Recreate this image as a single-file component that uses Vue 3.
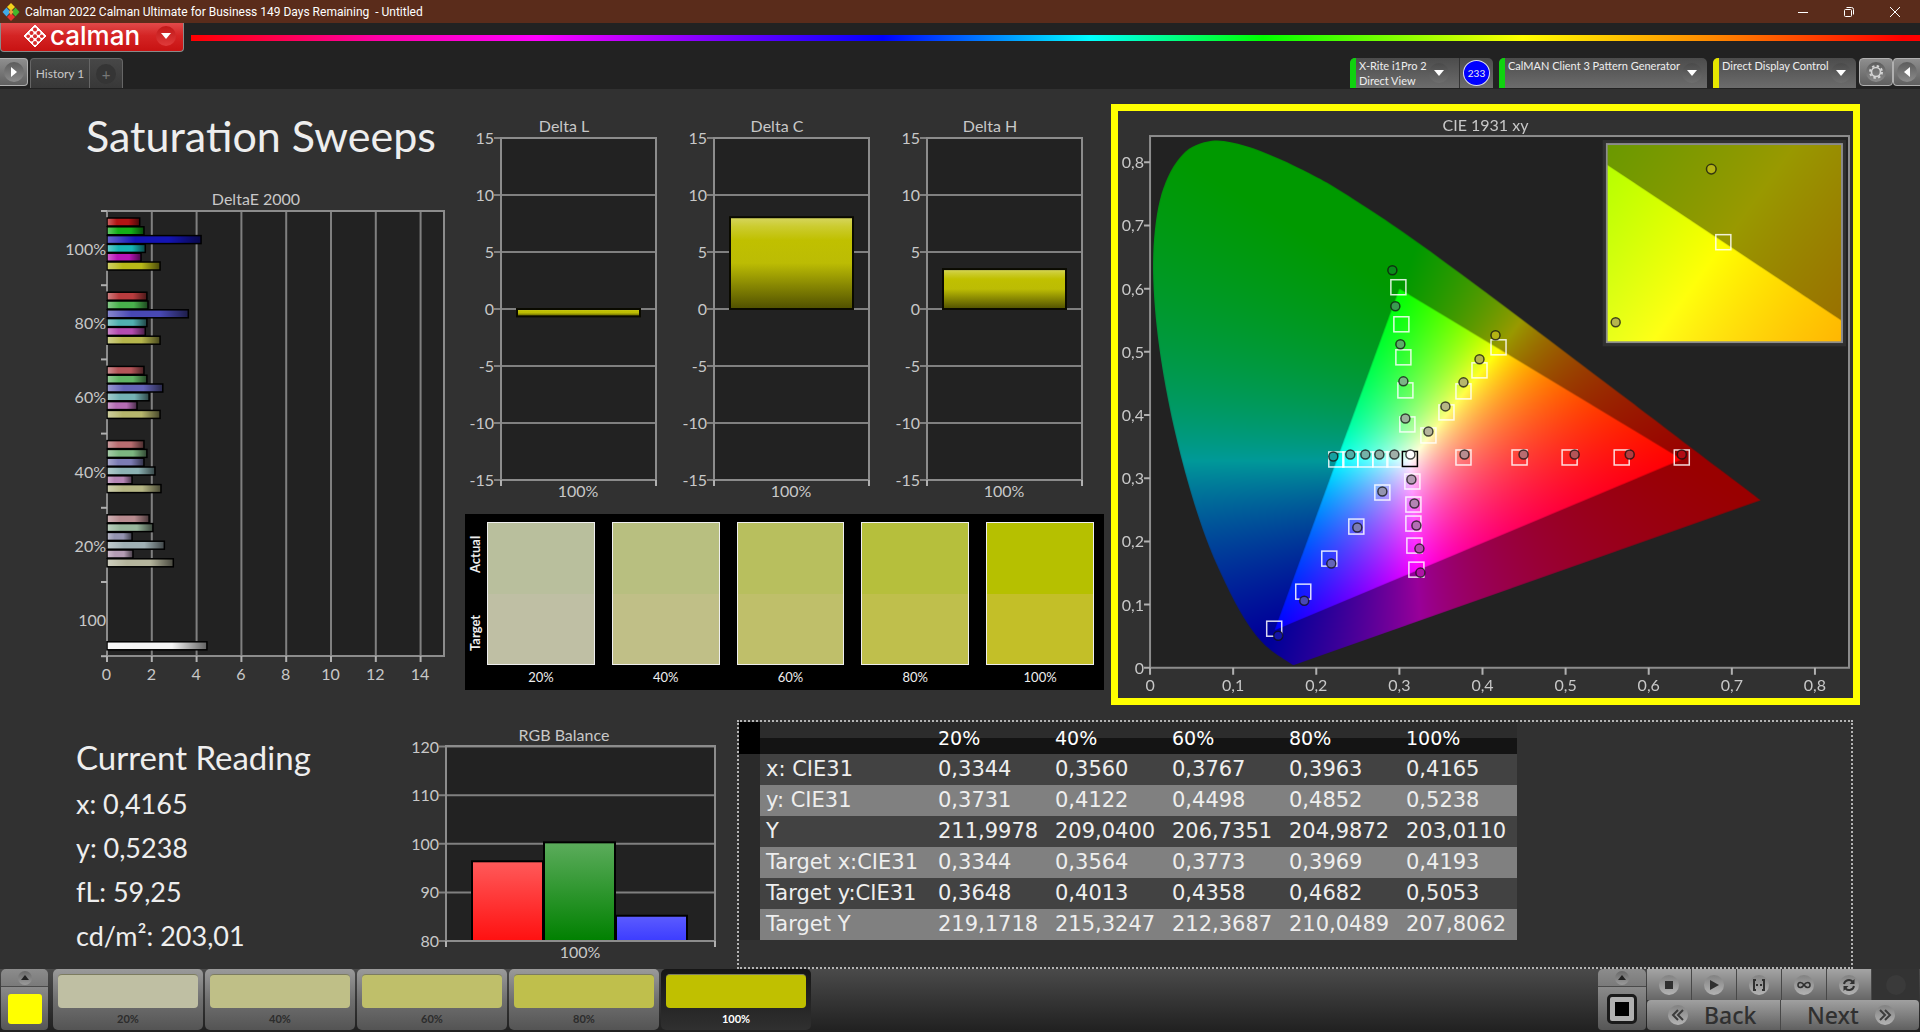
<script setup>
import { onMounted, ref } from 'vue'

const menus = [
  { id: 'meter', color: '#0fd20f', lines: ['X-Rite i1Pro 2', 'Direct View'], badge: '233' },
  { id: 'source', color: '#0fd20f', lines: ['CalMAN Client 3 Pattern Generator'] },
  { id: 'display', color: '#e6e600', lines: ['Direct Display Control'] }
]

/* DeltaE 2000 */
const unit = 22.4
const deltaE = [
  { label: '100%', bars: [['#b21414', 1.46], ['#14ae18', 1.65], ['#1414b4', 4.2], ['#16b4b4', 1.71], ['#b814b8', 1.52], ['#b8b818', 2.37]] },
  { label: '80%', bars: [['#b83c3e', 1.78], ['#48b04c', 1.83], ['#4848b4', 3.63], ['#50b0b0', 1.78], ['#b44cb0', 1.71], ['#b6b64c', 2.37]] },
  { label: '60%', bars: [['#b45458', 1.65], ['#60b464', 1.78], ['#6464b8', 2.49], ['#74b2b4', 1.88], ['#b46cb4', 1.34], ['#b6b66c', 2.37]] },
  { label: '40%', bars: [['#b86c70', 1.65], ['#7cb680', 1.78], ['#7c7cb4', 1.65], ['#8cb2b4', 2.14], ['#b484b4', 1.12], ['#b6b684', 2.41]] },
  { label: '20%', bars: [['#b88c90', 1.88], ['#98b69c', 2.05], ['#9494b0', 1.12], ['#a0b0b4', 2.56], ['#b49cb4', 1.16], ['#b4b49c', 2.96]] },
  { label: '100', bars: [null, null, null, null, null, null, ['#f4f4f4', 4.46]] }
]
const band = 74.2

/* Delta L / C / H */
const deltas = [
  { name: 'Delta L', value: -0.65 },
  { name: 'Delta C', value: 8.05 },
  { name: 'Delta H', value: 3.5 }
]
const deltaTicks = [15, 10, 5, 0, -5, -10, -15]
const dy = v => 194 - v * 11.4

const swatches = [
  { label: '20%', actual: '#b9bf9d', target: '#bfbfa4', button: '#bfbfa3' },
  { label: '40%', actual: '#b8bf80', target: '#c0bf87', button: '#bfbf87' },
  { label: '60%', actual: '#b8bf5e', target: '#bfbf6a', button: '#bfbf6a' },
  { label: '80%', actual: '#b6bf3c', target: '#bfbf4c', button: '#bfbf4c' },
  { label: '100%', actual: '#b6c000', target: '#c3bf28', button: '#c0c000' }
]

const readings = ['x: 0,4165', 'y: 0,5238', 'fL: 59,25', 'cd/m²: 203,01']

const rgbTicks = [120, 110, 100, 90, 80]
const rgbBars = [
  { x: 62, v: 96.4, fill: 'url(#gRed)' },
  { x: 134, v: 100.3, fill: 'url(#gGreen)' },
  { x: 206, v: 85.2, fill: 'url(#gBlue)' }
]
const ry = v => 237 - (v - 80) * 4.86

const columns = ['20%', '40%', '60%', '80%', '100%']
const rows = [
  ['x: CIE31', '0,3344', '0,3560', '0,3767', '0,3963', '0,4165'],
  ['y: CIE31', '0,3731', '0,4122', '0,4498', '0,4852', '0,5238'],
  ['Y', '211,9978', '209,0400', '206,7351', '204,9872', '203,0110'],
  ['Target x:CIE31', '0,3344', '0,3564', '0,3773', '0,3969', '0,4193'],
  ['Target y:CIE31', '0,3648', '0,4013', '0,4358', '0,4682', '0,5053'],
  ['Target Y', '219,1718', '215,3247', '212,3687', '210,0489', '207,8062']
]

/* CIE 1931 chart: plot origin and pixels per unit of x and y */
const O = { x: 32, y: 556, sx: 830, sy: 631 }
const cx = x => O.x + x * O.sx
const cy = y => O.y - y * O.sy
const xTicks = [0, 1, 2, 3, 4, 5, 6, 7, 8]
const tickText = n => (n ? '0,' + n : '0')

const targets = [
  [280, 176], [283, 213], [285, 246], [287, 279], [289, 313],
  [380, 236], [361, 259], [345, 280], [328, 301], [310, 324],
  [345, 346], [401, 346], [451, 346], [503, 346], [563, 346],
  [218, 348], [232, 348], [247, 348], [262, 348], [276, 348],
  [264, 381], [238, 415], [211, 447], [185, 480], [156, 517],
  [294, 370], [295, 393], [295, 412], [296, 434], [298, 458]
]
const measured = [
  [274, 159, '#0a8c1a'], [277, 195, '#3a9c50'], [282, 233, '#5cae68'], [285, 270, '#7cb486'], [287, 307, '#9cb49c'],
  [377, 224, '#b4b414'], [361, 248, '#b6b64c'], [345, 271, '#b6b66c'], [327, 295, '#b6b684'], [310, 320, '#b4b49c'],
  [346, 343, '#b88c90'], [405, 343, '#b86c70'], [456, 343, '#b45458'], [511, 343, '#b43c40'], [563, 343, '#b00c14'],
  [215, 345, '#16a0a0'], [232, 343, '#50b0a8'], [247, 343, '#74b2a8'], [261, 343, '#8cb2a8'], [276, 343, '#a0b0a8'],
  [264, 380, '#9494b0'], [239, 416, '#7c7cb4'], [213, 452, '#6464b8'], [186, 489, '#4848b4'], [160, 524, '#1414a8'],
  [293, 368, '#b49cb4'], [296, 392, '#b484b4'], [298, 414, '#b46cb4'], [301, 437, '#b44cb0'], [302, 461, '#b014a8']
]

const locus = [
  [0.1741, 0.005], [0.1714, 0.0051], [0.1644, 0.0109], [0.1566, 0.0177], [0.144, 0.0297], [0.1355, 0.0399],
  [0.1241, 0.0578], [0.1096, 0.0868], [0.0913, 0.1327], [0.0687, 0.2007], [0.0454, 0.295], [0.0235, 0.4127],
  [0.0082, 0.5384], [0.0039, 0.6548], [0.0139, 0.7502], [0.0389, 0.812], [0.0743, 0.8338], [0.1142, 0.8262],
  [0.1547, 0.8059], [0.1929, 0.7816], [0.2296, 0.7543], [0.3016, 0.6923], [0.3731, 0.6245], [0.4441, 0.5547],
  [0.5125, 0.4866], [0.5752, 0.4242], [0.627, 0.3725], [0.6915, 0.3083], [0.7347, 0.2653]
]
const gamut = [[0.64, 0.33], [0.3, 0.6], [0.15, 0.06]]

const W = 734
const H = 586
const canvas = ref(null)

/* brightest linear RGB that has the given chromaticity */
function chroma(x, y) {
  const X = x / y
  const Z = (1 - x - y) / y
  const lin = [
    3.2406 * X - 1.5372 - 0.4986 * Z,
    -0.9689 * X + 1.8758 + 0.0415 * Z,
    0.0557 * X - 0.204 + 1.057 * Z
  ].map(v => Math.max(0, v))
  const top = Math.max(...lin) || 1
  return lin.map(v => 255 * v / top)
}

function layer(w, h, toXY, gain) {
  const c = document.createElement('canvas')
  c.width = w
  c.height = h
  const g = c.getContext('2d')
  const img = g.createImageData(w, h)
  for (let j = 0; j < h; j++) {
    for (let i = 0; i < w; i++) {
      const [x, y] = toXY(i, j)
      const [r, gg, b] = chroma(x, Math.max(y, 0.0005))
      const k = (j * w + i) * 4
      img.data[k] = r * gain
      img.data[k + 1] = gg * gain
      img.data[k + 2] = b * gain
      img.data[k + 3] = 255
    }
  }
  g.putImageData(img, 0, 0)
  return c
}

function smooth(g, pts) {
  g.moveTo(...pts[0])
  for (let i = 0; i < pts.length - 1; i++) {
    const p0 = pts[Math.max(0, i - 1)]
    const p1 = pts[i]
    const p2 = pts[i + 1]
    const p3 = pts[Math.min(pts.length - 1, i + 2)]
    g.bezierCurveTo(
      p1[0] + (p2[0] - p0[0]) / 6, p1[1] + (p2[1] - p0[1]) / 6,
      p2[0] - (p3[0] - p1[0]) / 6, p2[1] - (p3[1] - p1[1]) / 6,
      p2[0], p2[1]
    )
  }
  g.closePath()
}

function triangle(g, map) {
  g.beginPath()
  gamut.forEach((p, i) => g[i ? 'lineTo' : 'moveTo'](...map(p)))
  g.closePath()
}

onMounted(() => {
  const g = canvas.value.getContext('2d')
  const toXY = (i, j) => [(i - O.x) / O.sx, (O.y - j) / O.sy]
  const map = p => [cx(p[0]), cy(p[1])]
  g.fillStyle = '#222'
  g.fillRect(O.x, 25, 698, 531)
  g.save()
  g.beginPath()
  smooth(g, locus.map(map))
  g.clip()
  g.drawImage(layer(W, H, toXY, 0.6), 0, 0)
  g.restore()
  g.save()
  triangle(g, map)
  g.clip()
  g.drawImage(layer(W, H, toXY, 1), 0, 0)
  g.restore()

  /* magnified view round the selected target */
  const box = { x: 488, y: 33, w: 235, h: 198 }
  const c = { x: 605, y: 131, sx: 4738, sy: 3956 }
  const zoomXY = (i, j) => [0.4193 + (i + box.x - c.x) / c.sx, 0.5053 - (j + box.y - c.y) / c.sy]
  const zoomMap = p => [c.x + (p[0] - 0.4193) * c.sx, c.y - (p[1] - 0.5053) * c.sy]
  g.save()
  g.beginPath()
  g.rect(box.x, box.y, box.w, box.h)
  g.clip()
  g.drawImage(layer(box.w, box.h, zoomXY, 0.6), box.x, box.y)
  triangle(g, zoomMap)
  g.clip()
  g.drawImage(layer(box.w, box.h, zoomXY, 1), box.x, box.y)
  g.restore()
})

const transport = ['stop', 'play', 'range', 'loop', 'refresh']
</script>

<template>
  <div class="app">
    <header class="titlebar">
      <svg class="appicon" width="18" height="18" viewBox="0 0 18 18" aria-hidden="true">
        <path d="M9 0l4 4-4 4-4-4z" fill="#f4d21c" />
        <path d="M4.500 4.500l4 4.500-4 4.500-4-4.500z" fill="#3fa9e8" />
        <path d="M13.500 4.500l4 4.500-4 4.500-4-4.500z" fill="#43b62c" />
        <path d="M9 10l4 4-4 4-4-4z" fill="#e6322e" />
        <path d="M9 6l2.500 3L9 12 6.500 9z" fill="#e8a03a" />
      </svg>
      <span class="caption">Calman 2022 Calman Ultimate for Business 149 Days Remaining&nbsp; - Untitled</span>
      <div class="winbuttons">
        <button aria-label="Minimize"><svg width="12" height="12"><path d="M1 6.500h10" /></svg></button>
        <button aria-label="Restore">
          <svg width="12" height="12"><rect x="1.500" y="3.500" width="7" height="7" rx="1" /><path d="M3.500 1.500h5q2 0 2 2v5" /></svg>
        </button>
        <button aria-label="Close"><svg width="12" height="12"><path d="M1 1l10 10M11 1L1 11" /></svg></button>
      </div>
    </header>

    <div class="toolbar">
      <div class="brandrow">
        <button class="brand">
          <svg width="24" height="24" viewBox="0 0 24 24" aria-hidden="true">
            <path d="M12 1l11 11-11 11L1 12z" fill="#fff" stroke="#fff" stroke-linejoin="round" />
            <g fill="#d82a2a">
              <circle cx="12" cy="5.500" r="2" /><circle cx="8.500" cy="9" r="2" /><circle cx="15.500" cy="9" r="2" />
              <circle cx="5.200" cy="12.300" r="1.800" /><circle cx="12" cy="12.300" r="2" /><circle cx="18.800" cy="12.300" r="1.800" />
              <circle cx="8.500" cy="15.600" r="2" /><circle cx="15.500" cy="15.600" r="2" /><circle cx="12" cy="19" r="2" />
            </g>
          </svg>
          <span class="wordmark">calman</span>
          <span class="knob red"><svg width="10" height="6"><path d="M0 0h10L5 6z" fill="#fff" /></svg></span>
        </button>
        <div class="rainbow"></div>
      </div>
      <div class="tabrow">
        <button class="square first" aria-label="Expand"><span class="knob"><svg width="6" height="10"><path d="M0 0l6 5-6 5z" fill="#fff" /></svg></span></button>
        <div class="tabs">
          <button class="tab">History 1</button>
          <button class="tab plus" aria-label="Add history"><span class="knob dark">+</span></button>
        </div>
        <div class="menus">
          <div v-for="m in menus" :key="m.id" class="menu" :class="m.id">
            <button class="menumain" :style="{ borderLeftColor: m.color }">
              <span class="menutext"><span v-for="l in m.lines" :key="l">{{ l }}</span></span>
              <span class="knob mid"><svg width="10" height="6"><path d="M0 0h10L5 6z" fill="#fff" /></svg></span>
            </button>
            <span v-if="m.badge" class="badge"><b>{{ m.badge }}</b></span>
          </div>
          <button class="square gear" aria-label="Settings">
            <span class="knob">
              <svg width="16" height="16" viewBox="0 0 16 16" fill="none" stroke="#d4d4d4">
                <circle cx="8" cy="8" r="4.500" stroke-width="1.600" />
                <circle cx="8" cy="8" r="6" stroke-width="2" stroke-dasharray="2.400 2.310" />
              </svg>
            </span>
          </button>
          <button class="square last" aria-label="Collapse"><span class="knob"><svg width="6" height="10"><path d="M6 0L0 5l6 5z" fill="#fff" /></svg></span></button>
        </div>
      </div>
    </div>

    <main class="board">
      <section class="left">
        <h1>Saturation Sweeps</h1>
        <svg class="chart" viewBox="0 0 465 510" role="img" aria-label="DeltaE 2000">
          <defs>
            <linearGradient id="gloss" x1="0" x2="1" y1="0" y2="0">
              <stop offset="0" stop-color="#fff" stop-opacity="0.350" />
              <stop offset="0.300" stop-color="#fff" stop-opacity="0" />
              <stop offset="0.650" stop-color="#000" stop-opacity="0" />
              <stop offset="1" stop-color="#000" stop-opacity="0.600" />
            </linearGradient>
          </defs>
          <text class="mid" x="256" y="20">DeltaE 2000</text>
          <rect class="plot" x="107" y="26" width="337" height="445" />
          <path v-for="i in 7" :key="i" class="line" :d="`M${107 + i * 44.8} 26V471`" />
          <rect class="frame" x="107" y="26" width="337" height="445" />
          <path v-for="i in 7" :key="'t' + i" class="tick" :d="`M101 ${26 + (i - 1) * band}h6`" />
          <g v-for="i in 8" :key="'x' + i">
            <path class="tick" :d="`M${107 + (i - 1) * 44.8} 471v6`" />
            <text class="mid" :x="106.5 + (i - 1) * 44.8" y="495">{{ (i - 1) * 2 }}</text>
          </g>
          <g v-for="(g, gi) in deltaE" :key="g.label">
            <text class="end" x="106" :y="70 + gi * band">{{ g.label }}</text>
            <template v-for="(b, bi) in g.bars" :key="bi">
              <g v-if="b">
                <rect x="107" :y="33 + gi * band + bi * 8.8" :width="b[1] * unit" height="8" :fill="b[0]" />
                <rect x="107" :y="33 + gi * band + bi * 8.8" :width="b[1] * unit" height="8" fill="url(#gloss)" stroke="#000" stroke-width="1.500" />
              </g>
            </template>
          </g>
        </svg>
      </section>

      <section class="middle">
        <div class="deltas">
          <svg v-for="d in deltas" :key="d.name" class="chart" viewBox="0 0 213 399" role="img" :aria-label="d.name">
            <defs>
              <linearGradient id="yellow" x1="0" x2="0" y1="0" y2="1">
                <stop offset="0" stop-color="#d6d660" />
                <stop offset="0.100" stop-color="#cccc30" />
                <stop offset="0.250" stop-color="#c0c000" />
                <stop offset="0.500" stop-color="#bcbc04" />
                <stop offset="1" stop-color="#505000" />
              </linearGradient>
            </defs>
            <text class="mid" x="99" y="17">{{ d.name }}</text>
            <rect class="plot" x="36" y="23" width="155" height="342" />
            <g v-for="t in deltaTicks" :key="t">
              <path class="line" :d="`M29 ${dy(t)}H191`" />
              <text class="end" x="29" :y="dy(t) + 6">{{ t }}</text>
            </g>
            <rect class="frame" x="36" y="23" width="155" height="342" />
            <path class="tick" d="M36 365v6M191 365v6" />
            <rect x="52" :y="Math.min(dy(d.value), 194)" width="123" :height="Math.abs(d.value) * 11.4" fill="url(#yellow)" stroke="#0a0a00" stroke-width="2" />
            <text class="mid" x="113" y="382">100%</text>
          </svg>
        </div>
        <div class="swatches">
          <div class="sides"><span>Actual</span><span>Target</span></div>
          <figure v-for="s in swatches" :key="s.label">
            <div class="swatch"><i :style="{ background: s.actual }"></i><i :style="{ background: s.target }"></i></div>
            <figcaption>{{ s.label }}</figcaption>
          </figure>
        </div>
      </section>

      <section class="cie">
        <canvas ref="canvas" class="layer" :width="W" :height="H"></canvas>
        <svg class="layer chart" :viewBox="`0 0 ${W} ${H}`" role="img" aria-label="CIE 1931 xy">
          <text class="mid" x="367" y="20">CIE 1931 xy</text>
          <rect class="frame" x="32" y="25" width="698" height="531" />
          <g v-for="t in xTicks" :key="t">
            <path class="tick" :d="`M${cx(t / 10)} 556v7M26 ${cy(t / 10)}h6`" />
            <text class="mid" :x="cx(t / 10)" y="579">{{ tickText(t) }}</text>
            <text class="end" x="26" :y="cy(t / 10) + 6">{{ tickText(t) }}</text>
          </g>
          <rect v-for="(p, i) in targets" :key="'s' + i" :x="p[0] - 7.5" :y="p[1] - 7.5" width="15" height="15" class="target" />
          <rect x="284" y="340" width="15" height="15" fill="none" stroke="#000" stroke-width="1.500" />
          <circle v-for="(p, i) in measured" :key="'c' + i" :cx="p[0]" :cy="p[1]" r="4.500" :fill="p[2]" class="reading" />
          <circle cx="292" cy="343" r="4.500" fill="#fff" class="reading" />
          <rect x="488" y="33" width="235" height="198" fill="none" stroke="#8c8c8c" stroke-width="2" />
          <rect x="485.500" y="30.500" width="240" height="203" fill="none" stroke="#303030" stroke-width="3" />
          <rect x="597" y="123.500" width="15" height="15" class="target" />
          <circle cx="592.500" cy="58" r="4.800" fill="#b4b414" class="reading" />
          <circle cx="497" cy="211" r="4.500" fill="#b6b64c" class="reading" />
        </svg>
      </section>

      <section class="current">
        <h2>Current Reading</h2>
        <p v-for="r in readings" :key="r">{{ r }}</p>
      </section>

      <section class="lower">
        <svg class="chart rgb" viewBox="0 1 330 264" role="img" aria-label="RGB Balance">
          <defs>
            <linearGradient id="gRed" x1="0" x2="0" y1="0" y2="1"><stop offset="0" stop-color="#ff5a5a" /><stop offset="1" stop-color="#ff1010" /></linearGradient>
            <linearGradient id="gGreen" x1="0" x2="0" y1="0" y2="1"><stop offset="0" stop-color="#5cac5c" /><stop offset="1" stop-color="#008000" /></linearGradient>
            <linearGradient id="gBlue" x1="0" x2="0" y1="0" y2="1"><stop offset="0" stop-color="#5c5cff" /><stop offset="1" stop-color="#3c3cff" /></linearGradient>
          </defs>
          <text class="mid" x="155" y="37">RGB Balance</text>
          <rect class="plot" x="37" y="43" width="269" height="194" />
          <g v-for="t in rgbTicks" :key="t">
            <path class="line" :d="`M30 ${ry(t)}H306`" />
            <text class="end" x="30" :y="ry(t) + 6">{{ t }}</text>
          </g>
          <rect v-for="b in rgbBars" :key="b.x" :x="b.x + 1" :y="ry(b.v)" width="71" :height="237 - ry(b.v)" :fill="b.fill" stroke="#000" stroke-width="2" />
          <rect class="frame" x="37" y="42" width="269" height="195" />
          <path class="tick" d="M37 237v6M306 237v6" />
          <text class="mid" x="171" y="254">100%</text>
        </svg>
        <div class="tablebox">
          <table>
            <thead>
              <tr><th class="grip"></th><th></th><th v-for="c in columns" :key="c" scope="col">{{ c }}</th></tr>
            </thead>
            <tbody>
              <tr v-for="r in rows" :key="r[0]">
                <td class="grip"></td>
                <th scope="row">{{ r[0] }}</th>
                <td v-for="(v, i) in r.slice(1)" :key="i">{{ v }}</td>
              </tr>
            </tbody>
          </table>
        </div>
      </section>
    </main>

    <footer class="bar">
      <div class="stack patch">
        <button class="up" aria-label="Raise pattern panel"><span class="knob tiny"><svg width="8" height="5"><path d="M4 0l4 5H0z" fill="#222" /></svg></span></button>
        <button class="chip" aria-label="Pattern colour"></button>
      </div>
      <div class="levels">
        <button v-for="(s, i) in swatches" :key="s.label" :class="{ on: i === 4 }">
          <i :style="{ background: s.button }"></i>
          <span>{{ s.label }}</span>
        </button>
      </div>
      <div class="stack">
        <button class="up" aria-label="Raise window panel"><span class="knob tiny"><svg width="8" height="5"><path d="M4 0l4 5H0z" fill="#222" /></svg></span></button>
        <button class="window" aria-label="Pattern window"><i></i></button>
      </div>
      <div class="controls">
        <div class="transport">
          <button v-for="t in transport" :key="t" :aria-label="t">
            <span class="knob flat">
              <svg width="16" height="16" viewBox="0 0 16 16" fill="none" stroke="#303030" stroke-width="2">
                <rect v-if="t === 'stop'" x="4" y="4" width="8" height="8" fill="#303030" stroke="none" />
                <path v-else-if="t === 'play'" d="M4 3l9 5-9 5z" fill="#303030" stroke="none" />
                <path v-else-if="t === 'range'" d="M5 3H3v10h2M11 3h2v10h-2M5 8h2M9 8h2" />
                <path v-else-if="t === 'loop'" d="M8 8C6 5 2 4.500 2 8s4 3 6 0 6-3.500 6 0-4 3-6 0z" stroke-width="1.600" />
                <g v-else><path d="M3 7a5 5 0 0 1 8.500-2.500M13 9a5 5 0 0 1-8.500 2.500" /><path d="M13.500 2v5h-5zM2.500 14V9h5z" fill="#303030" stroke="none" /></g>
              </svg>
            </span>
          </button>
          <span class="off"><span class="knob shade"></span></span>
        </div>
        <div class="nav">
          <button><span class="knob flat"><svg width="14" height="12" fill="none" stroke="#3c3c3c" stroke-width="2"><path d="M7 1L2 6l5 5M12 1L7 6l5 5" /></svg></span>Back</button>
          <button>Next<span class="knob flat"><svg width="14" height="12" fill="none" stroke="#3c3c3c" stroke-width="2"><path d="M2 1l5 5-5 5M7 1l5 5-5 5" /></svg></span></button>
        </div>
      </div>
    </footer>
  </div>
</template>

<style>
body { background: #313131; }
</style>

<style scoped>
.app { font-family: Lato, "Noto Sans", sans-serif; color: #eee; background: #313131; min-height: 100vh; display: flex; flex-direction: column; overflow: hidden; }
* { box-sizing: border-box; }
button { font: inherit; color: inherit; border: 0; padding: 0; margin: 0; background: none; display: flex; align-items: center; justify-content: center; }
svg { display: block; }

.titlebar { height: 23px; background: #5a2c1b; display: flex; align-items: center; color: #fff; font-family: Roboto, "Noto Sans", sans-serif; font-size: 12px; }
.appicon { margin: 0 5px 0 2px; }
.caption { flex: 1; white-space: nowrap; }
.winbuttons { display: flex; margin-right: 2px; }
.winbuttons button { width: 46px; height: 20px; }
.winbuttons svg { fill: none; stroke: #fff; }

.toolbar { background: #222; height: 66px; }
.brandrow { display: flex; height: 29px; align-items: flex-start; }
.brand { flex: none; width: 184px; height: 29px; padding: 0 7px 2px 22px; gap: 3px; justify-content: flex-start; background: linear-gradient(#e24a4a, #d42424 45%, #c81212); border: 1px solid #8a8a8a; border-top: 0; border-radius: 0 0 4px 4px; }
.wordmark { flex: 1; text-align: left; font-family: Inter, Lato, sans-serif; font-size: 26px; line-height: 24px; font-weight: 500; color: #fff; }
.rainbow { flex: 1; height: 6px; margin: 12px 0 0 7px; background: linear-gradient(90deg, #f00, #f0a 11%, #f0f 20%, #60f 32%, #00f 40%, #0af 48%, #0ff 52%, #0f0 62%, #8f0 70%, #ff0 77%, #f80 88%, #f00 99%); }
.knob { width: 20px; height: 20px; flex: none; border-radius: 50%; display: flex; align-items: center; justify-content: center; background: linear-gradient(#5c5c5c, #8c8c8c); }
.knob.red { background: linear-gradient(#c01818, #e03a3a); }
.knob.dark { background: #353535; color: #777; font-size: 15px; }
.knob.mid { background: linear-gradient(#4a4a4a, #6e6e6e); }
.knob.tiny { width: 14px; height: 14px; background: linear-gradient(#686868, #9a9a9a); }
.knob.flat { background: linear-gradient(#828282, #b4b4b4); }
.knob.shade { background: #3a3a3a; }

.tabrow { display: flex; align-items: flex-start; margin-top: 6px; gap: 2px; }
.square { width: 34px; height: 28px; border: 1px solid #b0b0b0; border-radius: 4px; background: linear-gradient(#8e8e8e, #606060); }
.square.first { width: 28px; border-left: 0; border-radius: 0 4px 4px 0; }
.square.last { width: 27px; border-right: 0; border-radius: 4px 0 0 4px; }
.tabs { display: flex; height: 30px; border: 1px solid #666; border-bottom: 0; border-radius: 4px 4px 0 0; background: linear-gradient(#474747, #383838); font-size: 12px; color: #c8c8c8; }
.tab { width: 58px; white-space: nowrap; }
.tab.plus { width: 33px; border-left: 1px solid #666; }
.menus { margin-left: auto; display: flex; align-items: flex-start; }
.menu { display: flex; height: 30px; margin-right: 6px; background: linear-gradient(#4c4c4c, #6c6c6c); border-radius: 5px 5px 0 0; overflow: hidden; font-size: 11px; line-height: 15px; }
.meter { width: 143px; }
.source { width: 208px; }
.display { width: 143px; margin-right: 3px; }
.menumain { flex: 1; height: 30px; border-left: 6px solid; padding: 0 5px 0 3px; justify-content: space-between; }
.meter .menumain { padding-right: 10px; }
.menutext { display: flex; flex-direction: column; align-self: flex-start; text-align: left; white-space: nowrap; }
.badge { width: 34px; display: flex; align-items: center; justify-content: center; border-left: 1px solid #333; }
.badge b { width: 27px; height: 26px; border: 1px solid #dde; border-radius: 50%; background: #00f; font-size: 10px; font-weight: 400; line-height: 24px; text-align: center; }

.board { display: grid; grid-template-columns: minmax(0, 465fr) minmax(0, 646fr) minmax(0, 749fr) minmax(0, 60fr); grid-template-rows: auto 1fr; align-items: start; flex: 1; }
.chart { width: 100%; height: auto; font-size: 16px; }
.chart text { fill: #c8c8c8; }
.mid { text-anchor: middle; }
.end { text-anchor: end; }
.plot { fill: #222; }
.frame { fill: none; stroke: #8c8c8c; stroke-width: 2; }
.line { stroke: #808080; stroke-width: 2; }
.tick { stroke: #b0b0b0; stroke-width: 2; }
h1 { margin: 0; height: 96px; padding: 15px 0 0 86px; font-size: 43px; line-height: 64px; font-weight: 400; white-space: nowrap; }

.middle { padding: 26px 7px 0 0; }
.deltas { display: grid; grid-template-columns: 1fr 1fr 1fr; }
.swatches { background: #000; display: grid; grid-template-columns: 4px repeat(5, 1fr); column-gap: 17px; padding: 8px 10px 0 1px; height: 176px; }
.sides { display: flex; flex-direction: column; height: 143px; width: 18px; justify-content: space-between; }
.sides span { writing-mode: vertical-rl; transform: rotate(180deg); font-size: 13px; line-height: 18px; font-weight: 700; text-align: center; height: 64px; }
figure { margin: 0; }
.swatch { height: 143px; border: 1px solid #eee; display: flex; flex-direction: column; }
.swatch i { flex: 1; }
figcaption { text-align: center; font-size: 13px; line-height: 24px; }

.cie { margin-top: 15px; border: 7px solid #ff0; display: grid; }
.layer { grid-area: 1 / 1; width: 100%; height: auto; display: block; }
.target { fill: none; stroke: #fff; stroke-width: 1.500; stroke-opacity: 0.850; }
.reading { stroke: #111; stroke-width: 1.500; stroke-opacity: 0.750; }

.current { grid-column: 1; padding: 30px 0 0 76px; white-space: nowrap; }
h2 { margin: 0; font-size: 33px; line-height: 44px; font-weight: 400; }
.current p { margin: 0; font-size: 27px; line-height: 44px; }
.current h2 + p { margin-top: 3px; }
.lower { grid-column: 2 / 5; display: flex; margin-left: -56px; }
.rgb { flex: 0 1 330px; width: 330px; }
.tablebox { flex: 1; margin: 15px 67px 0 -2px; height: 249px; border: 2px dotted #b4b4b4; }
table { border-collapse: collapse; font-family: "DejaVu Sans", sans-serif; font-size: 21px; table-layout: fixed; width: 778px; }
th, td { text-align: left; font-weight: 400; padding: 0 0 0 6px; height: 31px; line-height: 28px; white-space: nowrap; width: 117px; }
thead th { height: 32px; font-size: 19px; background: linear-gradient(#2c2c2c 50%, #141414 50%); color: #fff; }
thead th:nth-child(2) { width: 172px; }
th.grip, td.grip { width: 21px; padding: 0; background: #2a2a2a; }
thead th.grip { background: #000; }
tbody tr { background: #424242; }
tbody tr:nth-child(even) { background: #808080; }

.bar { height: 63px; padding-bottom: 2px; display: flex; background: linear-gradient(#4a4a4a, #202020); }
.stack { width: 48px; display: flex; flex-direction: column; margin-right: 1px; }
.stack.patch { width: 47px; margin: 0 5px 0 1px; }
.up { height: 18px; background: linear-gradient(#8c8c8c, #7a7a7a); border-radius: 5px 5px 0 0; border-bottom: 1px solid #4a4a4a; }
.stack > :last-child { flex: 1; background: linear-gradient(#8a8a8a, #565656); border-radius: 0 0 4px 4px; }
.chip::before { content: ""; width: 34px; height: 30px; background: #ff0; border-radius: 3px; }
.window i { width: 30px; height: 30px; border: 3px solid #1a1a1a; border-radius: 5px; background: linear-gradient(#000, #000) center / 14px 14px no-repeat, #b0b0b0; }
.levels { display: flex; gap: 2px; flex: 1; }
.levels button { width: 150px; flex-direction: column; justify-content: flex-start; background: linear-gradient(#9a9a9a, #707070 50%, #545454); border-radius: 5px; padding-top: 5px; color: #2c2c2c; font-size: 11px; font-weight: 700; }
.levels i { width: 140px; height: 36px; border-radius: 4px; border-top: 1px solid #7c7c60; }
.levels span { line-height: 22px; }
.levels .on { background: linear-gradient(#161616, #303030); color: #fff; }
.controls { width: 273px; padding-right: 1px; }
.transport { display: flex; height: 31px; }
.transport button { width: 45px; background: linear-gradient(#a4a4a4, #666); border-right: 1px solid #484848; }
.off { flex: 1; background: #333; display: flex; align-items: center; justify-content: center; }
.nav { display: flex; height: 30px; }
.nav button { flex: 1; justify-content: flex-start; gap: 16px; padding-left: 21px; background: linear-gradient(#a0a0a0, #606060); font-family: "Noto Sans", sans-serif; font-size: 23px; line-height: 28px; font-weight: 500; color: #303030; border-radius: 4px 0 0 4px; }
.nav button + button { padding-left: 26px; border-left: 1px solid #484848; border-radius: 0 4px 4px 0; }
</style>
